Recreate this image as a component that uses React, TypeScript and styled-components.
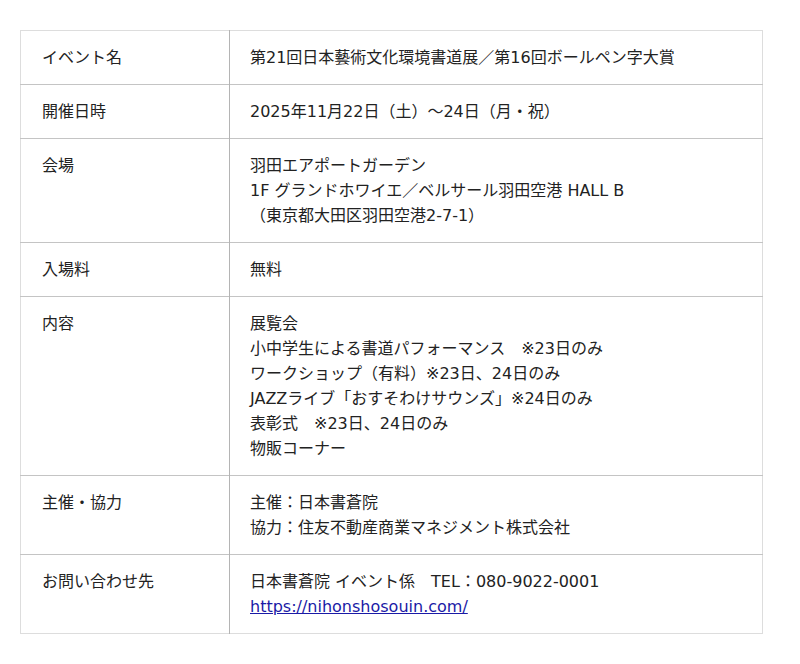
import styled, { createGlobalStyle } from 'styled-components'

const GlobalStyle = createGlobalStyle`
	body {
		margin: 0;
		background: #ffffff;
		font-family: "DejaVu Sans", "Noto Sans CJK JP", sans-serif;
		color: #222222;
	}
`

const Page = styled.div`
	padding: 30px 20px;
`

const Table = styled.table`
	width: 743px;
	border-collapse: collapse;
	border: 1px solid #dddddd;
	font-size: 16px;
	line-height: 25px;
`

const Label = styled.td`
	width: 167px;
	padding: 14px 20px 14px 21px;
	vertical-align: top;
	border-top: 1px solid #c4c4c4;
	border-right: 1px solid #b4b4b4;
	tr:first-child > & {
		border-top-color: #dddddd;
	}
`

const Value = styled.td`
	padding: 14px 20px 14px 20px;
	vertical-align: top;
	border-top: 1px solid #c4c4c4;
	tr:first-child > & {
		border-top-color: #dddddd;
	}
`

const Line = styled.div`
	white-space: nowrap;
`

const Url = styled.a`
	color: #1a1aa6;
	text-decoration: underline;
`

interface InfoRow {
	label: string
	lines: React.ReactNode[]
}

const rows: InfoRow[] = [
	{ label: 'イベント名', lines: ['第21回日本藝術文化環境書道展／第16回ボールペン字大賞'] },
	{ label: '開催日時', lines: ['2025年11月22日（土）〜24日（月・祝）'] },
	{
		label: '会場',
		lines: [
			'羽田エアポートガーデン',
			'1F グランドホワイエ／ベルサール羽田空港 HALL B',
			'（東京都大田区羽田空港2-7-1）',
		],
	},
	{ label: '入場料', lines: ['無料'] },
	{
		label: '内容',
		lines: [
			'展覧会',
			'小中学生による書道パフォーマンス　※23日のみ',
			'ワークショップ（有料）※23日、24日のみ',
			'JAZZライブ「おすそわけサウンズ」※24日のみ',
			'表彰式　※23日、24日のみ',
			'物販コーナー',
		],
	},
	{
		label: '主催・協力',
		lines: ['主催：日本書蒼院', '協力：住友不動産商業マネジメント株式会社'],
	},
	{
		label: 'お問い合わせ先',
		lines: [
			'日本書蒼院 イベント係　TEL：080-9022-0001',
			<Url href='https://nihonshosouin.com/'>https://nihonshosouin.com/</Url>,
		],
	},
]

export default function App() {
	return (
		<Page>
			<GlobalStyle />
			<Table>
				<tbody>
					{rows.map((row) => (
						<tr key={row.label}>
							<Label>{row.label}</Label>
							<Value>
								{row.lines.map((line, i) => (
									<Line key={i}>{line}</Line>
								))}
							</Value>
						</tr>
					))}
				</tbody>
			</Table>
		</Page>
	)
}
